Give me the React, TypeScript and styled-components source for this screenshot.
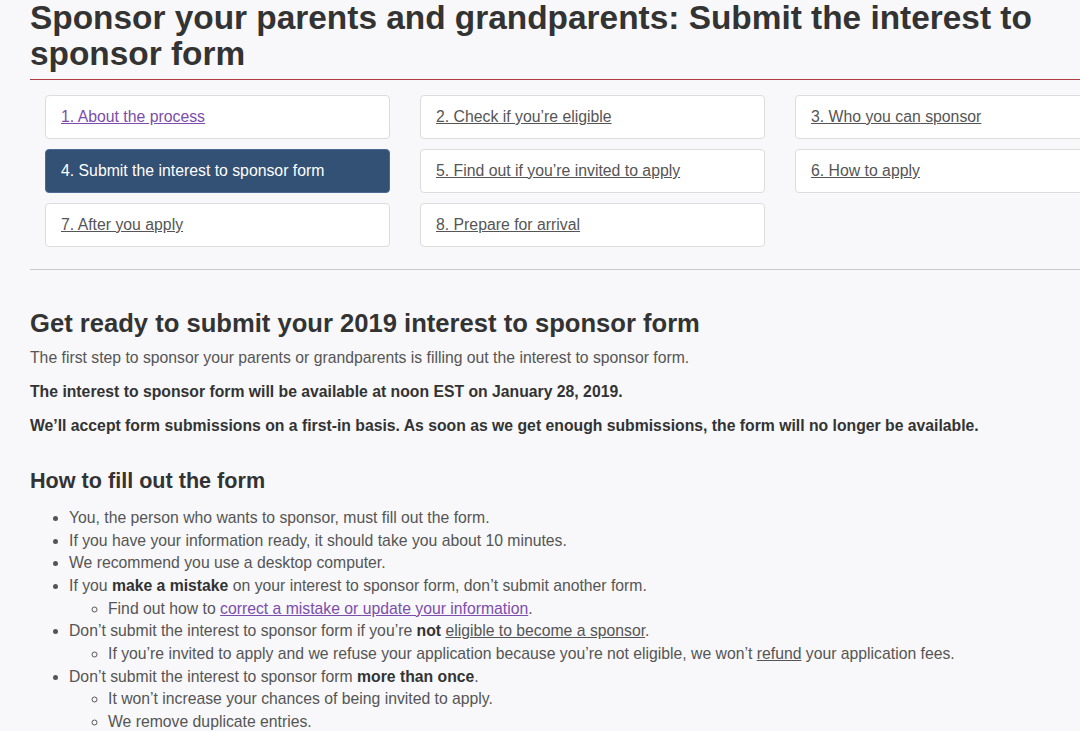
import React from "react";
import styled, { createGlobalStyle } from "styled-components";

const GlobalStyle = createGlobalStyle`
  html, body {
    margin: 0;
    padding: 0;
    background: #f8f8fa;
    overflow: hidden;
  }
  body {
    font-family: "Liberation Sans", Arial, sans-serif;
    color: #333;
  }
`;

const Page = styled.main`
  width: 1140px;
  padding: 0 0 0 30px;
`;

const Title = styled.h1`
  margin: 0;
  font-size: 33.4px;
  line-height: 36px;
  font-weight: bold;
  color: #333;
  padding-bottom: 7px;
  border-bottom: 1px solid #af3c43;
`;

const StepGrid = styled.nav`
  display: grid;
  grid-template-columns: repeat(3, 345px);
  column-gap: 30px;
  row-gap: 10px;
  margin: 15px 0 0 15px;
`;

const Step = styled.a<{ $active?: boolean; $visited?: boolean }>`
  display: flex;
  align-items: center;
  height: 44px;
  box-sizing: border-box;
  padding: 0 15px;
  border-radius: 4px;
  border: 1px solid ${(p) => (p.$active ? "#4a6b93" : "#dcdcdc")};
  background: ${(p) => (p.$active ? "#335075" : "#fff")};
  color: ${(p) => (p.$active ? "#fff" : p.$visited ? "#7c4dab" : "#555")};
  text-decoration: ${(p) => (p.$active ? "none" : "underline")};
  font-size: 15.8px;
`;

const Divider = styled.hr`
  border: 0;
  border-top: 1px solid #ccc;
  margin: 22px 0 0;
`;

const SectionTitle = styled.h2`
  margin: 39px 0 0;
  font-size: 25.6px;
  line-height: 28px;
  font-weight: bold;
  color: #333;
`;

const SubTitle = styled.h3`
  margin: 32px 0 0;
  font-size: 21.6px;
  line-height: 26px;
  font-weight: bold;
  color: #333;
`;

const Para = styled.p<{ $strong?: boolean }>`
  margin: ${(p) => (p.$strong ? "13px" : "10px")} 0 0;
  font-size: 15.75px;
  line-height: 21px;
  font-weight: ${(p) => (p.$strong ? "bold" : "normal")};
  color: ${(p) => (p.$strong ? "#333" : "#555")};
`;

const List = styled.ul<{ $nested?: boolean }>`
  margin: ${(p) => (p.$nested ? "0" : "13px 0 0")};
  padding-left: 39px;
  list-style: ${(p) => (p.$nested ? "circle" : "disc")};
  font-size: 15.75px;
  line-height: 22.65px;
  color: #555;
`;

const Item = styled.li``;

const B = styled.strong`
  color: #333;
`;

const Link = styled.a<{ $visited?: boolean }>`
  color: ${(p) => (p.$visited ? "#7c4dab" : "#555")};
  text-decoration: underline;
`;

const steps = [
  "1. About the process",
  "2. Check if you’re eligible",
  "3. Who you can sponsor",
  "4. Submit the interest to sponsor form",
  "5. Find out if you’re invited to apply",
  "6. How to apply",
  "7. After you apply",
  "8. Prepare for arrival",
];

export default function App() {
  return (
    <>
      <GlobalStyle />
      <Page>
        <Title>
          Sponsor your parents and grandparents: Submit the interest to sponsor form
        </Title>

        <StepGrid>
          {steps.map((s, i) => (
            <Step key={s} $active={i === 3} $visited={i === 0}>
              {s}
            </Step>
          ))}
        </StepGrid>

        <Divider />

        <SectionTitle>Get ready to submit your 2019 interest to sponsor form</SectionTitle>
        <Para>
          The first step to sponsor your parents or grandparents is filling out the interest to sponsor form.
        </Para>
        <Para $strong>The interest to sponsor form will be available at noon EST on January 28, 2019.</Para>
        <Para $strong>
          We’ll accept form submissions on a first-in basis. As soon as we get enough submissions, the form will no
          longer be available.
        </Para>

        <SubTitle>How to fill out the form</SubTitle>
        <List>
          <Item>You, the person who wants to sponsor, must fill out the form.</Item>
          <Item>If you have your information ready, it should take you about 10 minutes.</Item>
          <Item>We recommend you use a desktop computer.</Item>
          <Item>
            If you <B>make a mistake</B> on your interest to sponsor form, don’t submit another form.
            <List $nested>
              <Item>
                Find out how to <Link $visited>correct a mistake or update your information</Link>.
              </Item>
            </List>
          </Item>
          <Item>
            Don’t submit the interest to sponsor form if you’re <B>not</B> <Link>eligible to become a sponsor</Link>.
            <List $nested>
              <Item>
                If you’re invited to apply and we refuse your application because you’re not eligible, we won’t{" "}
                <Link>refund</Link> your application fees.
              </Item>
            </List>
          </Item>
          <Item>
            Don’t submit the interest to sponsor form <B>more than once</B>.
            <List $nested>
              <Item>It won’t increase your chances of being invited to apply.</Item>
              <Item>We remove duplicate entries.</Item>
            </List>
          </Item>
        </List>
      </Page>
    </>
  );
}
